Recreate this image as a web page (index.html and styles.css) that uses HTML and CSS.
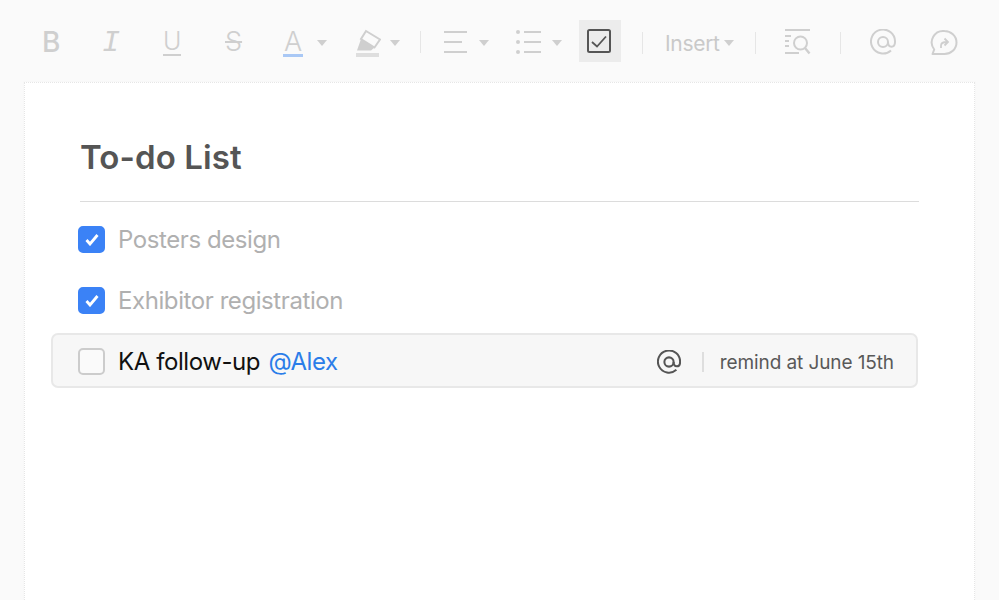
FILE: index.html
```html
<!DOCTYPE html>
<html lang="en">
<head>
<meta charset="utf-8">
<title>To-do List</title>
<link rel="stylesheet" href="styles.css">
</head>
<body>
<div class="toolbar">
  <span class="tool tool-b"><span class="g-bold">B</span></span>
  <span class="tool tool-i"><span class="g-italic">I</span></span>
  <span class="tool tool-u"><span class="g-under">U</span></span>
  <span class="tool tool-s"><span class="g-strike">S</span></span>
  <span class="tool tool-a"><span class="g-color">A</span><i class="caret"></i></span>
  <span class="tool tool-h">
    <svg class="ic-h" width="26" height="28" viewBox="0 0 26 28"><path d="M11 2l14 8.500-5.500 8L6 10z" fill="none" stroke="#cfcfcf" stroke-width="2"/><path d="M6 10l13.500 8.500-3.500 3H2z" fill="#cfcfcf"/><rect x="1" y="24" width="23" height="4" fill="#dedede"/></svg>
    <i class="caret"></i>
  </span>
  <i class="sep sep-1"></i>
  <span class="tool tool-align">
    <svg width="24" height="24" viewBox="0 0 24 24"><path d="M0 2h23M0 12h18M0 22h23" stroke="#cfcfcf" stroke-width="2" fill="none"/></svg>
    <i class="caret"></i>
  </span>
  <span class="tool tool-list">
    <svg width="26" height="24" viewBox="0 0 26 24"><circle cx="2" cy="2" r="2" fill="#cfcfcf"/><circle cx="2" cy="12" r="2" fill="#cfcfcf"/><circle cx="2" cy="22" r="2" fill="#cfcfcf"/><path d="M8 2h17M8 12h17M8 22h17" stroke="#cfcfcf" stroke-width="2" fill="none"/></svg>
    <i class="caret"></i>
  </span>
  <span class="tool-check">
    <svg class="ic-check" width="26" height="26" viewBox="0 0 26 26"><rect x="2" y="2" width="22" height="22" rx="1.500" fill="none" stroke="#555" stroke-width="2"/><path d="M6 14l5 4.500 9-10" fill="none" stroke="#555" stroke-width="1.800"/></svg>
  </span>
  <i class="sep sep-2"></i>
  <span class="tool tool-insert"><span class="insert-label">Insert</span><i class="caret"></i></span>
  <i class="sep sep-3"></i>
  <span class="tool tool-find">
    <svg width="26" height="26" viewBox="0 0 26 26"><path d="M0 1h25M0 7h6M0 12h4M0 17h4M0 24h14" stroke="#cfcfcf" stroke-width="2" fill="none"/><circle cx="15.500" cy="14" r="6.500" fill="none" stroke="#cfcfcf" stroke-width="2"/><path d="M20 19l4.500 5.500" stroke="#cfcfcf" stroke-width="2.400" fill="none"/></svg>
  </span>
  <i class="sep sep-4"></i>
  <span class="tool tool-at">
    <svg width="26" height="26" viewBox="0 0 26 26"><path d="M21 21.500A12 12 0 1 1 25 13c0 3-1.500 4.700-3.500 4.700S18 16 18 13" fill="none" stroke="#cfcfcf" stroke-width="2"/><circle cx="13" cy="13" r="5" fill="none" stroke="#cfcfcf" stroke-width="2"/></svg>
  </span>
  <span class="tool tool-share">
    <svg width="28" height="26" viewBox="0 0 28 26"><path d="M14.500 2C20.800 2 26.500 6.800 26.500 13.500S20.800 25 14.500 25H2.500l1.700-4.500A11.500 11.500 0 0 1 14.500 2z" fill="none" stroke="#cfcfcf" stroke-width="2" stroke-linejoin="round"/><path d="M11 19v-2.500c0-2.500 2-3.500 6-3.500M14.500 9.500l3.500 3.500-3.500 3.500" fill="none" stroke="#cfcfcf" stroke-width="1.800"/></svg>
  </span>
</div>

<main class="paper">
  <h1 class="title">To-do List</h1>
  <ul class="todos">
    <li class="todo">
      <span class="box box-on"><svg width="14" height="13" viewBox="0 0 14 13"><path d="M1.500 7l3.500 4 7.500-9" fill="none" stroke="#fff" stroke-width="2.800"/></svg></span>
      <span>Posters design</span>
    </li>
    <li class="todo">
      <span class="box box-on"><svg width="14" height="13" viewBox="0 0 14 13"><path d="M1.500 7l3.500 4 7.500-9" fill="none" stroke="#fff" stroke-width="2.800"/></svg></span>
      <span>Exhibitor registration</span>
    </li>
    <li class="todo todo-active">
      <span class="box"></span>
      <span class="todo-text">KA follow-up <span class="mention">@Alex</span></span>
      <svg class="row-at" width="24" height="24" viewBox="0 0 26 26"><path d="M21 21.500A12 12 0 1 1 25 13c0 3-1.500 4.700-3.500 4.700S18 16 18 13" fill="none" stroke="#555" stroke-width="2.200"/><circle cx="13" cy="13" r="5" fill="none" stroke="#555" stroke-width="2.200"/></svg>
      <i class="row-sep"></i>
      <span class="remind">remind at June 15th</span>
    </li>
  </ul>
</main>
</body>
</html>
```

FILE: styles.css
```css
* { box-sizing: border-box; }
html, body { margin: 0; height: 100%; }
body {
  background: #fafafa;
  font-family: Inter, "Liberation Sans", sans-serif;
  overflow: hidden;
}
.toolbar {
  display: flex;
  align-items: center;
  height: 82px;
  padding: 1px 0 0 42px;
  color: #cfcfcf;
}
.tool { display: flex; align-items: center; flex: none; }
.caret {
  display: block;
  width: 0; height: 0;
  margin-left: 12px;
  margin-top: 3px;
  border-left: 5.5px solid transparent;
  border-right: 5.5px solid transparent;
  border-top: 6px solid #cfcfcf;
}
.sep { display: block; flex: none; width: 1px; height: 22px; background: #e6e6e6; }

.g-bold { font-size: 28px; font-weight: 500; line-height: 30px; }
.g-italic { font-family: "Liberation Mono", monospace; font-style: italic; font-size: 30px; line-height: 30px; margin-top: 3px; margin-left: -1px; }
.g-under { font-size: 25px; font-weight: 300; line-height: 25px; border-bottom: 2px solid #cfcfcf; margin-top: 1px; }
.g-strike { font-size: 27px; font-weight: 300; line-height: 30px; text-decoration: line-through; text-decoration-thickness: 2px; padding: 0 4px; margin-left: -1px; }
.g-color { font-size: 27px; font-weight: 300; line-height: 25px; border-bottom: 3px solid #a9c8f5; padding: 0 1px; margin-top: 2px; }

.tool-b { width: 61px; }
.tool-i { width: 60px; }
.tool-u { width: 59px; }
.tool-s { width: 61px; }
.tool-a { width: 72px; }
.tool-a .caret { margin-left: 14px; }
.tool-h { width: 65px; }
.tool-h .caret { margin-left: 9px; }
.ic-h { display: block; margin-top: 3px; }
.sep-1 { margin-right: 23px; margin-top: 1px; }
.tool-align { width: 72px; }
.tool-align .caret { margin-left: 11px; }
.tool-list { width: 63px; }
.tool-list .caret { margin-left: 10px; }
.tool-check {
  display: flex; align-items: center; justify-content: center; flex: none;
  width: 42px; height: 42px;
  margin-top: -1px;
  background: #ececec;
}
.ic-check { display: block; margin-left: -2px; }
.sep-2 { margin-left: 21px; margin-right: 22px; margin-top: 3px; }
.insert-label { font-size: 21px; letter-spacing: -0.3px; color: #c9c9c9; margin-top: 4px; }
.tool-insert .caret { margin-left: 4px; }
.tool-insert { width: 90px; }
.sep-3 { margin-right: 29px; margin-top: 3px; }
.tool-find { width: 55px; }
.sep-4 { margin-right: 29px; margin-top: 3px; }
.tool-at { width: 60px; }

.paper {
  margin: 0 24px;
  height: 518px;
  background: #fff;
  padding: 49px 55px 0 55px;
  border: 1px dotted #e6e6e6;
  border-bottom: 0;
  box-shadow: 0 0 0 1px #f8f8f8;
}
.title {
  margin: 0;
  height: 70px;
  border-bottom: 1px solid #dcdcdc;
  font-size: 33px;
  line-height: 50px;
  font-weight: 600;
  letter-spacing: 0.1px;
  color: #555;
}
.todos { list-style: none; margin: 7px 0 0; padding: 0; }
.todo {
  display: flex;
  align-items: center;
  height: 61px;
  font-size: 24px;
  letter-spacing: -0.42px;
  color: #b0b0b0;
}
.box {
  display: flex; align-items: center; justify-content: center; flex: none;
  width: 27px; height: 27px;
  margin-left: -2px;
  margin-right: 13px;
  border-radius: 5px;
  border: 2px solid #cccccc;
  background: #fafafa;
}
.box-on { background: #3b82f6; border-color: #3b82f6; }
.todo-active {
  height: 55px;
  margin-left: -29px;
  margin-right: 1px;
  margin-top: 2px;
  padding: 2px 22px 0 27px;
  background: #f7f7f7;
  border: 2px solid #e8e8e8;
  border-radius: 7px;
  color: #111;
}
.mention { color: #2b7de9; margin-left: 2px; }
.todo-text { flex: 1; }
.row-at { display: block; flex: none; margin-right: 21px; }
.row-sep { display: block; flex: none; width: 2px; height: 20px; background: #dedede; margin-right: 16px; }
.remind { font-size: 19px; letter-spacing: -0.1px; color: #595959; margin-top: 2px; }
```
